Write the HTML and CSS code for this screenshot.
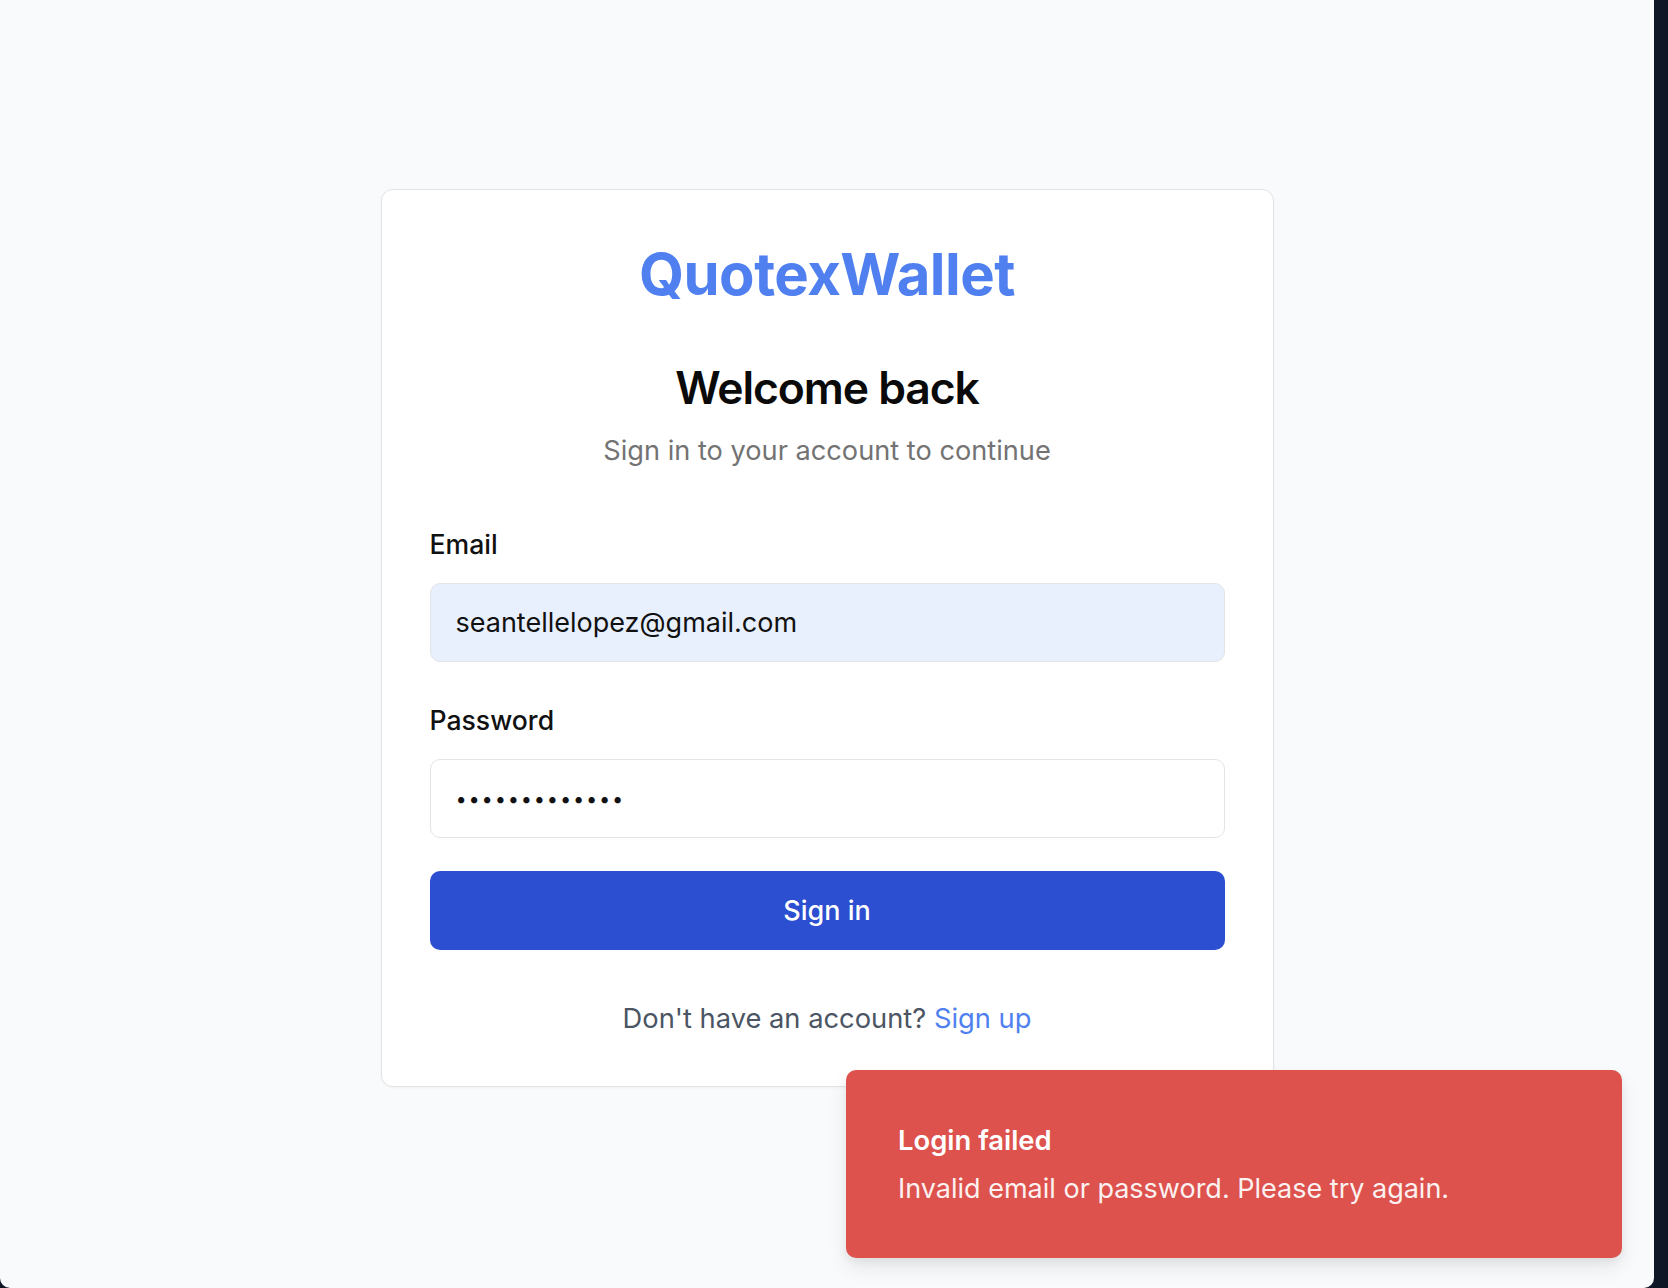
FILE: index.html
```html
<!DOCTYPE html>
<html lang="en">
<head>
<meta charset="utf-8">
<title>QuotexWallet - Sign in</title>
<link rel="stylesheet" href="styles.css">
</head>
<body>
<div class="screen">
  <main class="page">
    <section class="card">
      <div class="brand">QuotexWallet</div>
      <h1 class="title">Welcome back</h1>
      <p class="subtitle">Sign in to your account to continue</p>
      <form class="form">
        <label class="label">Email</label>
        <div class="input input-filled">seantellelopez@gmail.com</div>
        <label class="label label-pass">Password</label>
        <div class="input"><span class="dots">•••••••••••••</span></div>
        <div class="button">Sign in</div>
      </form>
      <p class="footer">Don't have an account? <a class="link">Sign up</a></p>
    </section>
    <div class="toast">
      <div class="toast-title">Login failed</div>
      <div class="toast-body">Invalid email or password. Please try again.</div>
    </div>
  </main>
  <div class="edge"></div>
</div>
</body>
</html>
```
FILE: styles.css
```css
* { box-sizing: border-box; }
html, body { margin: 0; padding: 0; }
body {
  background: #0f1626;
  font-family: Inter, "Noto Sans", "Liberation Sans", sans-serif;
  width: 1668px;
  height: 1288px;
  overflow: hidden;
}
.screen {
  display: flex;
  height: 1288px;
}
.page {
  position: relative;
  width: 1654px;
  height: 1288px;
  background: #f8fafc;
  border-bottom-right-radius: 10px;
  border-bottom-left-radius: 10px;
  padding-top: 189px;
  display: flex;
  flex-direction: column;
  align-items: center;
}
.edge { flex: 1; background: #0f1626; }
.card {
  width: 893px;
  background: #ffffff;
  border: 1.5px solid #e4e4e7;
  border-radius: 12px;
  box-shadow: 0 1px 3px rgba(0,0,0,0.04);
  padding: 49px 48px 48px;
  display: flex;
  flex-direction: column;
}
.brand {
  text-align: center;
  font-size: 58px;
  line-height: 70px;
  font-weight: 700;
  color: #5080ef;
  letter-spacing: -0.5px;
}
.title {
  margin: 52px 0 0;
  text-align: center;
  font-size: 44.5px;
  line-height: 54px;
  font-weight: 600;
  color: #0a0a0a;
  letter-spacing: -1.1px;
}
.subtitle {
  margin: 16px 0 0;
  text-align: center;
  font-size: 27.2px;
  line-height: 40px;
  color: #737373;
}
.form {
  margin-top: 55px;
  display: flex;
  flex-direction: column;
}
.label {
  font-size: 26.6px;
  line-height: 36px;
  font-weight: 500;
  color: #111111;
  margin-bottom: 21px;
}
.label-pass { margin-top: 40px; }
.input {
  height: 79px;
  border: 1.5px solid #e4e4e7;
  border-radius: 10px;
  background: #ffffff;
  display: flex;
  align-items: center;
  padding-left: 25px;
  font-size: 27px;
  color: #111111;
}
.input-filled { background: #e8f0fe; }
.dots {
  font-size: 20px;
  letter-spacing: 1.8px;
  color: #111111;
}
.button {
  margin-top: 33px;
  height: 79px;
  border-radius: 10px;
  background: #2b4fd0;
  color: #ffffff;
  display: flex;
  align-items: center;
  justify-content: center;
  font-size: 27px;
  font-weight: 500;
}
.footer {
  margin: 49px 0 0;
  text-align: center;
  font-size: 27.3px;
  line-height: 39px;
  color: #4b5563;
}
.link { color: #5080ef; text-decoration: none; }
.toast {
  position: absolute;
  right: 32px;
  bottom: 30px;
  width: 776px;
  height: 188px;
  background: #dd524d;
  border-radius: 10px;
  box-shadow: 0 10px 20px rgba(0,0,0,0.08), 0 4px 8px rgba(0,0,0,0.05);
  padding: 52px 52px 0;
  color: #ffffff;
}
.toast-title {
  font-size: 27.4px;
  line-height: 36px;
  font-weight: 600;
}
.toast-body {
  margin-top: 13px;
  font-size: 27px;
  line-height: 36px;
  opacity: 0.92;
}
```
